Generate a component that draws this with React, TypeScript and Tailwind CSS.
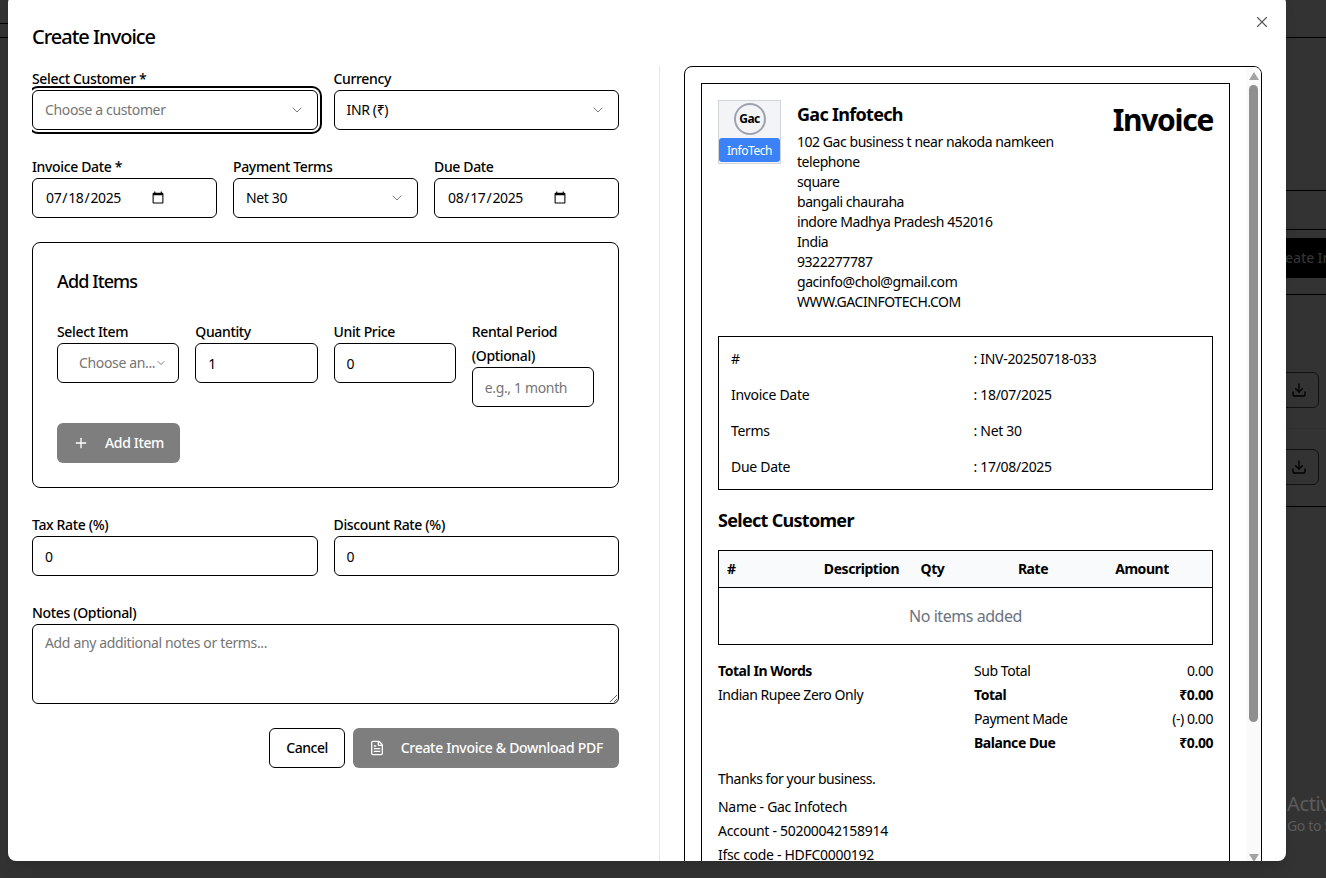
import { ChevronDown, Download, FileText, Plus, X } from "lucide-react";
import type { ReactNode } from "react";

const FIELD =
  "flex h-10 w-full rounded-md border border-black bg-white px-3 py-2 text-sm text-black placeholder:text-[#757575] outline-none";

function Label({ children }: { children: ReactNode }) {
  return <label className="block pt-px text-sm font-medium leading-6 text-black [&]:-mb-px">{children}</label>;
}

function Select({ text, muted, focus }: { text: string; muted?: boolean; focus?: boolean }) {
  return (
    <button
      type="button"
      className={`${FIELD} items-center justify-between ${focus ? "ring-2 ring-black ring-offset-2 ring-offset-white" : ""}`}
    >
      <span className={muted ? "text-[#757575]" : ""}>{text}</span>
      <ChevronDown size={16} strokeWidth={1.5} className="text-black opacity-50" />
    </button>
  );
}

function Field({ label, value, placeholder }: { label: string; value?: string; placeholder?: string }) {
  return (
    <div>
      <Label>{label}</Label>
      <input readOnly defaultValue={value} placeholder={placeholder} className={FIELD} />
    </div>
  );
}

function DateField({ label, value }: { label: string; value: string }) {
  return (
    <div>
      <Label>{label}</Label>
      <input type="date" defaultValue={value} className={FIELD} />
    </div>
  );
}

function Backdrop() {
  return (
    <div className="flex h-full flex-col overflow-hidden bg-[#333333]">
      <div className="h-[38px] shrink-0 border-b border-black">
        <div className="h-6 w-8 border-b border-black" />
      </div>
      <div className="flex flex-1 flex-col pl-[256px]">
        <div className="h-[153px] shrink-0 border-b border-black" />
        <div className="h-[39px] shrink-0 border-b border-black" />
        <div className="h-[65px] shrink-0 border-b border-black pl-[980px] pt-2">
          <div className="flex h-10 w-[200px] items-center justify-center whitespace-nowrap rounded-md bg-black pr-[36px] text-sm font-medium tracking-[-0.1px] text-[#333333]">
            Create Invoice
          </div>
        </div>
        <div className="flex h-[134px] shrink-0 items-start justify-end border-b border-[#2f2f2f] pr-[7px] pt-[77px]">
          <div className="flex h-9 w-10 items-center justify-center rounded-md border border-[#111111] text-black">
            <Download size={16} />
          </div>
        </div>
        <div className="flex h-[78px] shrink-0 items-start justify-end border-b border-black pr-[7px] pt-[20px]">
          <div className="flex h-9 w-10 items-center justify-center rounded-md border border-[#111111] text-black">
            <Download size={16} />
          </div>
        </div>
        <div className="flex flex-1 flex-col pl-[1031px] pt-[284px] text-[#5c5c5c]">
          <span className="whitespace-nowrap text-xl leading-[26px]">Activate Windows</span>
          <span className="whitespace-nowrap text-sm leading-[18px]">Go to Settings</span>
        </div>
      </div>
    </div>
  );
}

function FormColumn() {
  return (
    <div className="w-[587px] shrink-0 space-y-6 overflow-hidden">
      <div className="grid grid-cols-2 gap-4">
        <div>
          <Label>Select Customer *</Label>
          <Select text="Choose a customer" muted focus />
        </div>
        <div>
          <Label>Currency</Label>
          <Select text="INR (₹)" />
        </div>
      </div>

      <div className="grid grid-cols-3 gap-4">
        <DateField label="Invoice Date *" value="2025-07-18" />
        <div>
          <Label>Payment Terms</Label>
          <Select text="Net 30" />
        </div>
        <DateField label="Due Date" value="2025-08-17" />
      </div>

      <div className="rounded-lg border border-black p-6">
        <h3 className="mb-6 text-lg font-medium leading-7 tracking-[-0.9px] text-black">Add Items</h3>
        <div className="grid grid-cols-4 items-start gap-4">
          <div>
            <Label>Select Item</Label>
            <button type="button" className={`${FIELD} items-center justify-between !pl-[21px] !pr-4`}>
              <span className="whitespace-nowrap text-[#757575]">Choose an...</span>
              <ChevronDown size={12} className="shrink-0 text-black opacity-50" />
            </button>
          </div>
          <Field label="Quantity" value="1" />
          <Field label="Unit Price" value="0" />
          <Field label="Rental Period (Optional)" placeholder="e.g., 1 month" />
        </div>
        <button
          type="button"
          className="mt-4 flex h-10 items-center gap-4 rounded-md bg-black px-4 text-sm font-medium text-white opacity-50"
        >
          <Plus size={16} />
          Add Item
        </button>
      </div>

      <div className="grid grid-cols-2 gap-4">
        <Field label="Tax Rate (%)" value="0" />
        <Field label="Discount Rate (%)" value="0" />
      </div>

      <div>
        <Label>Notes (Optional)</Label>
        <textarea
          readOnly
          placeholder="Add any additional notes or terms..."
          className="block h-20 w-full rounded-md border border-black bg-white px-3 py-2 text-sm text-black outline-none placeholder:text-[#757575]"
        />
      </div>

      <div className="flex justify-end gap-2">
        <button
          type="button"
          className="flex h-10 items-center rounded-md border border-black bg-white px-4 text-sm font-medium tracking-[-0.5px] text-black"
        >
          Cancel
        </button>
        <button
          type="button"
          className="flex h-10 items-center gap-4 rounded-md bg-black px-4 text-sm font-medium tracking-[-0.3px] text-white opacity-50"
        >
          <FileText size={16} />
          Create Invoice &amp; Download PDF
        </button>
      </div>
    </div>
  );
}

function Scrollbar() {
  return (
    <div className="flex w-[15px] shrink-0 flex-col items-center bg-[#fafafa] pt-1">
      <svg width="10" height="8" viewBox="0 0 10 8" className="mt-[1px] shrink-0">
        <polygon points="5,0 10,8 0,8" fill="#a3a3a3" />
      </svg>
      <div className="mt-[5px] h-[637px] w-[9px] shrink-0 rounded-[5px] bg-[#8f8f8f]" />
      <svg width="10" height="8" viewBox="0 0 10 8" className="mt-[132px] shrink-0">
        <polygon points="0,0 10,0 5,8" fill="#a3a3a3" />
      </svg>
    </div>
  );
}

function Invoice() {
  const address = [
    "102 Gac business t near nakoda namkeen",
    "telephone",
    "square",
    "bangali chauraha",
    "indore Madhya Pradesh 452016",
    "India",
    "9322277787",
    "gacinfo@chol@gmail.com",
    "WWW.GACINFOTECH.COM",
  ];
  const meta = [
    ["#", ": INV-20250718-033"],
    ["Invoice Date", ": 18/07/2025"],
    ["Terms", ": Net 30"],
    ["Due Date", ": 17/08/2025"],
  ];
  const totals: [string, string, boolean][] = [
    ["Sub Total", "0.00", false],
    ["Total", "₹0.00", true],
    ["Payment Made", "(-) 0.00", false],
    ["Balance Due", "₹0.00", true],
  ];
  return (
    <div className="h-[1000px] w-[529px] shrink-0 border border-black bg-white p-4 text-sm tracking-[-0.45px] text-black">
      <div className="flex items-start justify-between">
        <div className="flex gap-4">
          <div className="flex h-16 w-[63px] shrink-0 flex-col items-center border border-[#d1d5db] bg-[#f3f4f6]">
            <div className="mt-[2px] flex h-8 w-8 items-center justify-center rounded-full border-2 border-[#9ca3af] text-xs font-bold">
              Gac
            </div>
            <div className="mt-[3px] flex h-6 w-[61px] items-center justify-center rounded-[3px] bg-[#3b82f6] pt-px text-xs text-white">
              InfoTech
            </div>
          </div>
          <div>
            <h2 className="mb-1 text-lg font-bold leading-7 tracking-[-0.7px]">Gac Infotech</h2>
            {address.map((line) => (
              <p key={line} className="leading-5">
                {line}
              </p>
            ))}
          </div>
        </div>
        <h1 className="pt-[2px] text-3xl font-bold leading-9 tracking-[-1.3px]">Invoice</h1>
      </div>

      <div className="mt-6 border border-black px-3 py-1 tracking-[-0.3px]">
        {meta.map(([k, v]) => (
          <div key={k} className="grid h-9 grid-cols-2 items-center gap-4">
            <span>{k}</span>
            <span>{v}</span>
          </div>
        ))}
      </div>

      <h3 className="my-4 text-lg font-bold leading-7 tracking-[-0.7px]">Select Customer</h3>

      <div className="border border-black">
        <div className="grid h-[37px] grid-cols-[97px_91px_51px_150px_68px] items-center border-b border-black bg-[#f9fafb] text-sm font-bold">
          <span className="pl-2">#</span>
          <span className="text-center">Description</span>
          <span className="text-center">Qty</span>
          <span className="text-center">Rate</span>
          <span className="text-center">Amount</span>
        </div>
        <p className="py-4 text-center text-base leading-6 text-[#6b7280]">No items added</p>
      </div>

      <div className="mt-[14px] grid grid-cols-[256px_1fr]">
        <div>
          <p className="font-bold leading-6">Total In Words</p>
          <p className="leading-6">Indian Rupee Zero Only</p>
        </div>
        <div>
          {totals.map(([k, v, bold]) => (
            <div key={k} className={`flex justify-between leading-6 ${bold ? "font-bold" : ""}`}>
              <span>{k}</span>
              <span>{v}</span>
            </div>
          ))}
        </div>
      </div>

      <p className="mt-[14px] leading-5">Thanks for your business.</p>
      <div className="mt-[6px] leading-6 tracking-[-0.3px]">
        <p>Name - Gac Infotech</p>
        <p>Account - 50200042158914</p>
        <p>Ifsc code - HDFC0000192</p>
      </div>
    </div>
  );
}

export default function App() {
  return (
    <div className="relative h-[878px] w-[1326px] overflow-hidden font-['Noto_Sans',sans-serif] tracking-[-0.35px]">
      <Backdrop />
      <div className="absolute left-2 top-[-5px] flex h-[866px] w-[1278px] flex-col overflow-hidden rounded-lg bg-white shadow-lg">
        <button type="button" className="absolute right-[15px] top-[18px] text-[#555555]">
          <X size={18} strokeWidth={1.5} />
        </button>
        <h2 className="mb-[15px] ml-6 mt-7 text-xl font-medium leading-7 tracking-[-1px] text-black">Create Invoice</h2>
        <div className="flex min-h-0 flex-1 pl-6">
          <FormColumn />
          <div className="ml-10 flex min-h-0 flex-1 border-l border-[#e5e7eb] pl-6 pr-6">
            <div className="flex h-[900px] w-[578px] overflow-hidden rounded-t-lg border border-black">
              <div className="flex-1 overflow-hidden p-4">
                <Invoice />
              </div>
              <Scrollbar />
            </div>
          </div>
        </div>
      </div>
    </div>
  );
}
